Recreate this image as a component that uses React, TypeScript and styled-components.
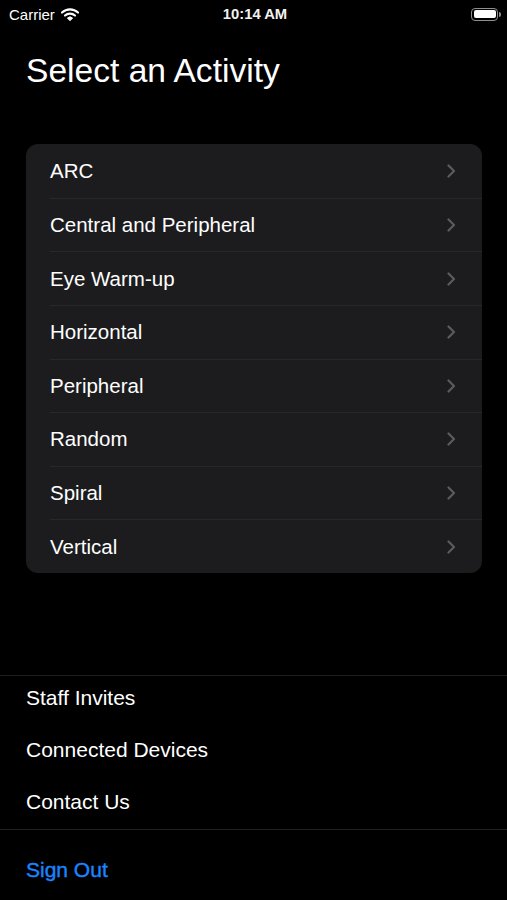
import React from "react";
import styled, { createGlobalStyle } from "styled-components";

const GlobalStyle = createGlobalStyle`
  html, body {
    margin: 0;
    padding: 0;
    background: #000;
  }
  body {
    font-family: "Liberation Sans", Arial, sans-serif;
    color: #fff;
    -webkit-font-smoothing: antialiased;
  }
`;

const Screen = styled.div`
  width: 507px;
  height: 900px;
  display: flex;
  flex-direction: column;
  background: #000;
  overflow: hidden;
`;

const StatusBar = styled.div`
  height: 28px;
  display: grid;
  grid-template-columns: 1fr auto 1fr;
  align-items: center;
  padding: 0 6px 0 9px;
  box-sizing: border-box;
`;

const StatusLeft = styled.div`
  display: flex;
  align-items: center;
  gap: 6px;
  font-size: 15px;
  color: #fff;
`;

const StatusTime = styled.div`
  font-size: 14.8px;
  font-weight: 700;
  color: #f2f2f2;
`;

const StatusRight = styled.div`
  display: flex;
  justify-content: flex-end;
  align-items: center;
`;

const Battery = styled.div`
  position: relative;
  width: 27px;
  height: 13px;
  box-sizing: border-box;
  border: 1.3px solid #8e8e93;
  border-radius: 4px;
  padding: 1.5px;
  margin-right: 3px;
  &::after {
    content: "";
    position: absolute;
    right: -4px;
    top: 3.5px;
    width: 2px;
    height: 4.5px;
    border-radius: 0 2px 2px 0;
    background: #8e8e93;
  }
`;

const BatteryFill = styled.div`
  width: 100%;
  height: 100%;
  background: #fff;
  border-radius: 2px;
`;

const Title = styled.h1`
  margin: 23px 0 0 26px;
  font-size: 33.6px;
  line-height: 40px;
  font-weight: 400;
  color: #fff;
`;

const Card = styled.div`
  margin: 53px 25px 0 26px;
  background: #1c1c1e;
  border-radius: 12px;
  overflow: hidden;
`;

const ActivityRow = styled.div<{ $first?: boolean }>`
  height: 53.625px;
  margin-left: 24px;
  padding-right: 26px;
  display: flex;
  align-items: center;
  justify-content: space-between;
  box-sizing: border-box;
  border-top: ${(p) => (p.$first ? "none" : "1px solid #28282b")};
`;

const RowLabel = styled.span`
  font-size: 20.5px;
  color: #fff;
`;

const Spacer = styled.div`
  flex: 1;
`;

const Divider = styled.div`
  height: 1px;
  background: #1f1f21;
`;

const MenuList = styled.div`
  display: flex;
  flex-direction: column;
  gap: 8px;
  padding: 0 0 5px 26px;
`;

const MenuItem = styled.div`
  height: 44px;
  display: flex;
  align-items: center;
  font-size: 21px;
  color: #fff;
`;

const SignOutRow = styled.div`
  height: 44px;
  margin-top: 18px;
  margin-bottom: 8px;
  padding-left: 26px;
  display: flex;
  align-items: center;
  font-size: 21px;
  color: #1a84ff;
  -webkit-text-stroke: 0.4px #1a84ff;
`;

const Wifi = () => (
  <svg width="18" height="13" viewBox="0 0 18 13">
    <path
      d="M1 4.6 A11.5 11.5 0 0 1 17 4.6"
      fill="none"
      stroke="#fff"
      strokeWidth="2.1"
      strokeLinecap="round"
    />
    <path
      d="M4 7.6 A7.2 7.2 0 0 1 14 7.6"
      fill="none"
      stroke="#fff"
      strokeWidth="2.1"
      strokeLinecap="round"
    />
    <path d="M6.4 10.2 A3.6 3.6 0 0 1 11.6 10.2 L9 12.6 Z" fill="#fff" stroke="#fff" strokeWidth="1" strokeLinejoin="round" />
  </svg>
);

const Chevron = () => (
  <svg width="9" height="14" viewBox="0 0 9 14">
    <path
      d="M1.5 1.5 L7 7 L1.5 12.5"
      fill="none"
      stroke="#5b5b5f"
      strokeWidth="2.2"
      strokeLinecap="round"
      strokeLinejoin="round"
    />
  </svg>
);

const activities = [
  "ARC",
  "Central and Peripheral",
  "Eye Warm-up",
  "Horizontal",
  "Peripheral",
  "Random",
  "Spiral",
  "Vertical",
];

export default function App() {
  return (
    <>
      <GlobalStyle />
      <Screen>
        <StatusBar>
          <StatusLeft>
            <span>Carrier</span>
            <Wifi />
          </StatusLeft>
          <StatusTime>10:14 AM</StatusTime>
          <StatusRight>
            <Battery>
              <BatteryFill />
            </Battery>
          </StatusRight>
        </StatusBar>
        <Title>Select an Activity</Title>
        <Card>
          {activities.map((a, i) => (
            <ActivityRow key={a} $first={i === 0}>
              <RowLabel>{a}</RowLabel>
              <Chevron />
            </ActivityRow>
          ))}
        </Card>
        <Spacer />
        <Divider />
        <MenuList>
          <MenuItem>Staff Invites</MenuItem>
          <MenuItem>Connected Devices</MenuItem>
          <MenuItem>Contact Us</MenuItem>
        </MenuList>
        <Divider />
        <SignOutRow>Sign Out</SignOutRow>
      </Screen>
    </>
  );
}
